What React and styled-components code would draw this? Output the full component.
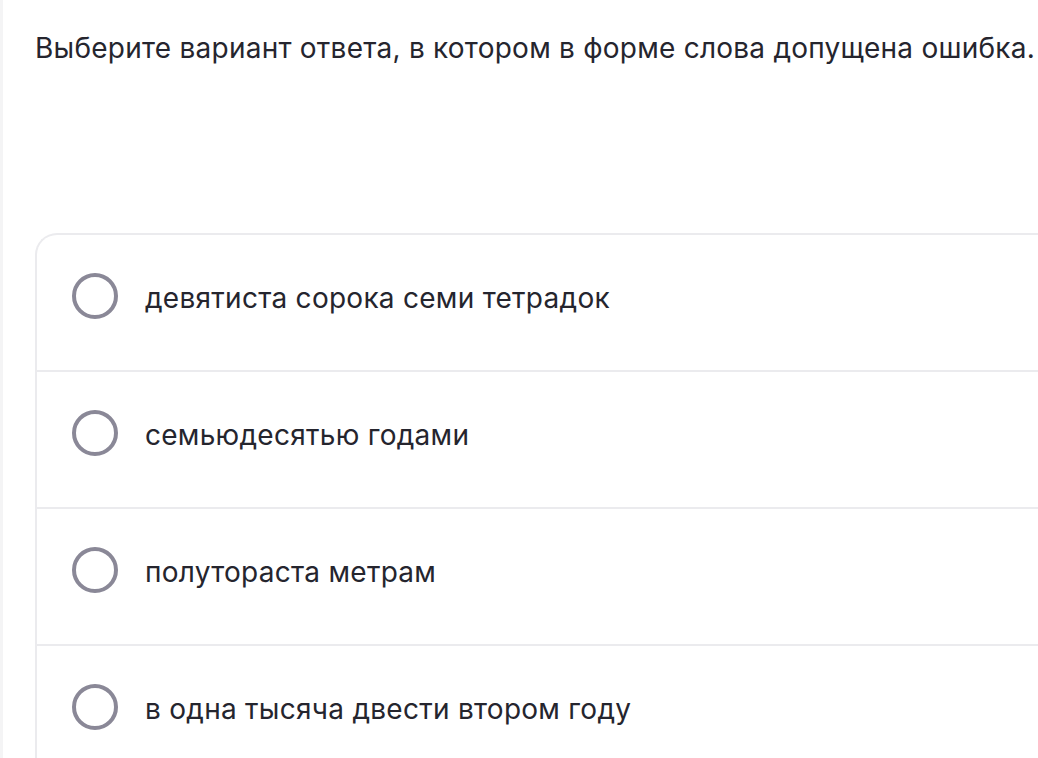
import styled, { createGlobalStyle } from 'styled-components';

const GlobalStyle = createGlobalStyle`
    html, body {
        margin: 0;
        padding: 0;
        background: #ffffff;
    }
    body {
        font-family: Inter, "Noto Sans", sans-serif;
        color: #25252e;
        -webkit-font-smoothing: antialiased;
    }
`;

const Page = styled.div`
    width: 1038px;
    height: 758px;
    overflow: hidden;
    box-sizing: border-box;
    padding: 28px 0 0 32px;
    border-left: 3px solid #f4f4f5;
`;

const Question = styled.h1`
    margin: 0;
    font-size: 28px;
    font-weight: 400;
    line-height: 40px;
    letter-spacing: 0.24px;
    white-space: nowrap;
`;

const OptionsCard = styled.ul`
    list-style: none;
    margin: 165px 0 0 0;
    padding: 0;
    width: 1040px;
    border: 2px solid #ebebee;
    border-right: none;
    border-radius: 22px 0 0 22px;
`;

const OptionRow = styled.li`
    display: flex;
    align-items: center;
    gap: 27px;
    box-sizing: border-box;
    height: ${(p) => (p.$first ? '135px' : '137px')};
    padding: 0 0 10px 35px;
    border-top: ${(p) => (p.$first ? 'none' : '2px solid #ebebee')};
    font-size: 28px;
    letter-spacing: 0.27px;
    cursor: pointer;
`;

const Radio = styled.span`
    flex: none;
    box-sizing: border-box;
    width: 46px;
    height: 46px;
    margin-top: -4px;
    border-radius: 50%;
    border: 4px solid #8a8897;
`;

const options = [
    'девятиста сорока семи тетрадок',
    'семьюдесятью годами',
    'полутораста метрам',
    'в одна тысяча двести втором году',
];

export default function App() {
    return (
        <>
            <GlobalStyle />
            <Page>
                <Question>Выберите вариант ответа, в котором в форме слова допущена ошибка.</Question>
                <OptionsCard>
                    {options.map((text, i) => (
                        <OptionRow key={text} $first={i === 0}>
                            <Radio />
                            <span>{text}</span>
                        </OptionRow>
                    ))}
                </OptionsCard>
            </Page>
        </>
    );
}
